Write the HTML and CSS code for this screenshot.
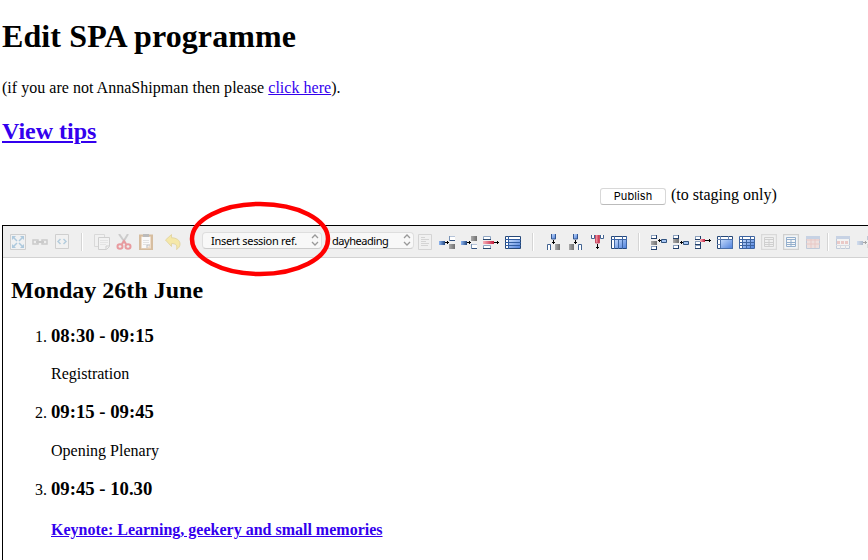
FILE: index.html
```html
<!DOCTYPE html>
<html lang="en">
<head>
<meta charset="utf-8">
<title>Edit SPA programme</title>
<link rel="stylesheet" href="styles.css">
</head>
<body>
<svg class="defs" width="0" height="0" aria-hidden="true">
  <defs>
    <linearGradient id="blue" x1="0" y1="0" x2="1" y2="1"><stop offset="0" stop-color="#c4dafb"/><stop offset="1" stop-color="#4d80dd"/></linearGradient>
    <linearGradient id="bar" x1="0" y1="0" x2="1" y2="0"><stop offset="0" stop-color="#8db6f3"/><stop offset="1" stop-color="#23477f"/></linearGradient>
    <linearGradient id="red" x1="0" y1="0" x2="1" y2="0"><stop offset="0" stop-color="#f7b3bb"/><stop offset="1" stop-color="#c51c3d"/></linearGradient>
    <linearGradient id="grey" x1="0" y1="0" x2="1" y2="0"><stop offset="0" stop-color="#aaa"/><stop offset="1" stop-color="#707070"/></linearGradient>
    <symbol id="cell" viewBox="0 0 6 5"><path fill="#fff" d="M0 0h6v5H0z"/><path fill="#b5c3d8" d="M0 0h6v1H0z"/><path fill="#34527e" d="M0 4h6v1H0z"/><path fill="#7892b5" d="M0 0h1v5H0z"/></symbol>
    <symbol id="box" viewBox="0 0 6 4"><path fill="#fff" d="M0 0h6v4H0z"/><path fill="#8ba0bd" d="M0 0h6v1H0zM0 0h1v4H0z"/><path fill="#223f6a" d="M0 3h6v1H0zM5 0h1v4H5z"/></symbol>
  </defs>
</svg>
<h1>Edit SPA programme</h1>
<p class="intro">(if you are not AnnaShipman then please <a href="#">click here</a>).</p>
<h2 class="tips"><a href="#">View tips</a></h2>
<div class="publish"><button type="button">Publish</button><span>(to staging only)</span></div>
<main class="editor">
  <div class="toolbar">
    <svg class="icon off"><path d="M.5.5h15v15H.5z" fill="#f4f8fb" stroke="#888"/><path d="M2 2h4L2 6zM14 2v4l-4-4zM2 14v-4l4 4zM14 14h-4l4-4z" fill="#1b75b5"/><path d="M3 3l4 4M13 3L9 7M3 13l4-4M13 13L9 9" stroke="#1b75b5" stroke-width="1.500"/></svg>
    <svg class="icon off"><path d="M1 6h5v4H1zM10 6h5v4h-5z" fill="#eee" stroke="#777" stroke-width="1.500"/><path d="M4 8h8" stroke="#777" stroke-width="2"/></svg>
    <svg class="icon off"><path d="M1.500.5h13v14h-13z" fill="#f8f8f8" stroke="#888"/><path d="M6.500 5L4 7.500 6.500 10M9.500 5L12 7.500 9.500 10" fill="none" stroke="#3280b5" stroke-width="1.500"/></svg>
    <i class="sep"></i>
    <svg class="icon off"><path d="M.5.500h10v12H.5z" fill="#f7f7f7" stroke="#aaa"/><path d="M4.500 3.500h11v9l-3 3h-8z" fill="#fafafa" stroke="#888"/><path d="M6 6.500h8M6 8.500h8M6 10.500h6" stroke="#ccc"/><path d="M12 15v-3h3" fill="none" stroke="#888"/></svg>
    <svg class="icon cut"><path d="M3 0l7 10M12 0L6 10" stroke="#999" stroke-width="2"/><ellipse cx="4" cy="12.500" rx="2.500" ry="2.300" fill="none" stroke="#e01c28" stroke-width="2"/><ellipse cx="12" cy="12.500" rx="2.500" ry="2.300" fill="none" stroke="#e01c28" stroke-width="2"/><path d="M6 10l2-3 2 3" fill="none" stroke="#e01c28" stroke-width="2"/></svg>
    <svg class="icon paste"><path d="M2 1.500h12v14H2z" fill="#efddca" stroke="#d6bd9f" stroke-width="2"/><path d="M4 3h8v8l-3 3H4z" fill="#fafafa"/><path d="M5 0h6v3H5z" fill="#bbb"/><path d="M5 6.500h6M5 8.500h6M5 10.500h4" stroke="#e2e2e2"/><path d="M9 14v-3h3" fill="none" stroke="#bbb"/></svg>
    <svg class="icon undo"><path d="M.5 6L6.500.5v3.300c5 0 8.500 2.500 8.500 6.200 0 2.500-1.500 4.200-3.500 5.500 1.200-4-.5-6-5-6v3z" fill="#f5e8a8" stroke="#e3d6a4"/></svg>
    <div class="select session"><span>Insert session ref.</span><svg class="chev"><path d="M1 4l3-3 3 3M1 8l3 3 3-3"/></svg></div>
    <div class="select style"><span>dayheading</span><svg class="chev"><path d="M1 4l3-3 3 3M1 8l3 3 3-3"/></svg></div>
    <svg class="icon off"><path d="M1.500.5h13v15h-13z" fill="#f5f5f5" stroke="#999"/><path d="M4 3.500h4M4 5.500h8M4 7.500h5M4 9.500h8M4 11.500h7" stroke="#999"/></svg>
    <svg class="icon"><path fill="url(#bar)" d="M0 7h6v4H0z"/><path d="M6 8.500h4M8.500 7v3" stroke="#000"/><use href="#cell" x="10" y="2" width="6" height="5"/><path fill="url(#grey)" d="M10 10h6v5h-6z"/></svg>
    <svg class="icon"><path fill="url(#bar)" d="M0 7h6v4H0z"/><path d="M6 8.500h4M8.500 7v3" stroke="#000"/><path fill="url(#grey)" d="M10 2h6v5h-6z"/><use href="#cell" x="10" y="10" width="6" height="5"/></svg>
    <svg class="icon"><path d="M.5 2.500h7v3h-7zM.5 11.500h7v3h-7z" fill="#fff" stroke="#8fa5c2"/><path d="M0 5.500h8M0 14.500h8" stroke="#29486f"/><path fill="url(#red)" d="M0 7h11v3H0z"/><path d="M11 8.500h5M14.500 7v3" stroke="#000"/></svg>
    <svg class="icon"><path d="M.5 2.500h15v12H.5z" fill="#fff" stroke="#264878"/><path fill="url(#blue)" d="M4 6h11v8H4z"/><path d="M0 5.500h16M0 8.500h16M0 11.500h16M3.500 2v13" stroke="#315da1"/></svg>
    <i class="sep"></i>
    <svg class="icon"><path fill="url(#blue)" stroke="#34568f" d="M6.500 0v5h4V0"/><path d="M8.500 6v4M7 8.500h3" stroke="#000"/><path d="M2.500 16v-5.500h3V16" fill="#fff" stroke="#426391"/><path fill="url(#grey)" d="M10 10h5v6h-5z"/></svg>
    <svg class="icon"><path fill="url(#blue)" stroke="#34568f" d="M6.500 0v5h4V0"/><path d="M8.500 6v4M7 8.500h3" stroke="#000"/><path fill="url(#grey)" d="M2 10h5v6H2z"/><path d="M11.500 16v-5.500h3V16" fill="#fff" stroke="#426391"/></svg>
    <svg class="icon"><path d="M2.500 1v3.500h3V1M11.500 1v3.500h3V1" fill="#fff" stroke="#426391"/><path fill="url(#red)" stroke="#c65066" d="M6.500 1v8h4V1"/><path d="M8.500 10v5M7 13.500h3" stroke="#000"/></svg>
    <svg class="icon"><path d="M.5 2.500h15v12H.5z" fill="#fff" stroke="#264878"/><path fill="url(#blue)" d="M4 5h12v9H4z"/><path d="M0 5.500h16M3.500 2v13M7.500 5v10M11.500 2v13M15.500 2v13" stroke="#3d65a5"/></svg>
    <i class="sep"></i>
    <svg class="icon"><use href="#box" x="0" y="1" width="6" height="4"/><path fill="url(#grey)" d="M0 7h6v4H0z"/><use href="#box" x="0" y="12" width="6" height="4"/><path d="M7 6.500h3M8.500 5v3" stroke="#000"/><path d="M10.500 5.500h5v3h-5z" fill="#a8c6f2" stroke="#31537f"/></svg>
    <svg class="icon"><use href="#box" x="0" y="1" width="6" height="4"/><path fill="url(#grey)" d="M0 5h6v4H0z"/><use href="#box" x="0" y="11" width="6" height="4"/><path d="M7 8.500h3M8.500 7v3" stroke="#000"/><path d="M10.500 7.500h5v3h-5z" fill="#a8c6f2" stroke="#31537f"/></svg>
    <svg class="icon"><use href="#box" x="0" y="2" width="6" height="4"/><use href="#box" x="0" y="7" width="6" height="4"/><use href="#box" x="0" y="11" width="6" height="4"/><path fill="url(#red)" d="M5 5h5v3H5z"/><path d="M10 6.500h6M14.500 5v3" stroke="#000"/></svg>
    <svg class="icon"><path d="M.5 2.500h15v12H.5z" fill="#fff" stroke="#264878"/><path fill="url(#blue)" stroke="#4b70aa" d="M3.500 5.500h12v9h-12z"/><path d="M3.500 2v3M0 5.500h4M0 10.500h3M11.500 2v3" stroke="#6984b1"/></svg>
    <svg class="icon"><path fill="#fff" d="M0 2h16v13H0z"/><path fill="url(#blue)" d="M4 5h11v9H4z"/><path d="M.5 2.500h15v12H.5zM0 5.500h16M0 8.500h16M0 11.500h16M3.500 2v13M7.500 5v10M11.500 2v13" fill="none" stroke="#3e64a0"/></svg>
    <svg class="icon off"><path d="M.5.5h15v15H.5z" fill="#f4f4f4" stroke="#aaa" stroke-width="1.500"/><path d="M3.500 3.500h9v9h-9zM3 5.500h10M3 8.500h10M3 10.500h10M8 6v6" fill="none" stroke="#888"/></svg>
    <svg class="icon semi"><path d="M.5.500h15v15H.5z" fill="#f4f8fb" stroke="#bbb" stroke-width="1.500"/><path d="M3.500 3.500h9v9h-9zM3 5.500h10M3 8.500h10M3 10.500h10M8 6v6" fill="#fff" stroke="#5886b7"/></svg>
    <svg class="icon off"><path d="M1.500 2.500h13v12h-13z" fill="#edc1b9" stroke="#5777aa"/><path d="M1 3.500h14" stroke="#6c91cb" stroke-width="3"/><path d="M1 6h14M1 10h14M6 5v9M10 5v9" stroke="#dc7169"/></svg>
    <i class="sep late"></i>
    <svg class="icon off"><path d="M1.500 2.500h13v12h-13z" fill="#fff" stroke="#5777aa"/><path d="M1 3.500h14" stroke="#6c91cb" stroke-width="3"/><path d="M2 8.500h12" stroke="#df756d" stroke-width="3" stroke-dasharray="3 1"/><path d="M1 11.500h14M5.500 11v4M10.500 11v4" stroke="#a3abc2"/></svg>
    <svg class="icon last off"><path fill="url(#bar)" d="M0 7h6v4H0z"/><path d="M6 8.500h4M8.500 7v3" stroke="#000"/><path d="M10 2h1v4h-1z" fill="#54739e"/><path fill="#aaa" d="M10 10h1v4h-1z"/></svg>
  </div>
  <svg class="ring" viewBox="0 0 142 78"><ellipse cx="71" cy="39" rx="68" ry="35"/></svg>
  <section class="content">
    <h2>Monday 26th June</h2>
    <ol>
      <li><h3>08:30 - 09:15</h3><p>Registration</p></li>
      <li><h3>09:15 - 09:45</h3><p>Opening Plenary</p></li>
      <li><h3>09:45 - 10.30</h3><p class="keynote"><a href="#">Keynote: Learning, geekery and small memories</a></p></li>
    </ol>
  </section>
</main>
</body>
</html>
```
FILE: styles.css
```css
* { box-sizing: border-box; }
body {
  margin: 0;
  padding: 18px 0 0 2px;
  height: 560px;
  overflow: hidden;
  background: #fff;
  color: #000;
  font: 16px/18px "Liberation Serif", serif;
}
h1, h2, h3, p, ol { margin: 0; }
a { color: #3300ee; }
.defs { position: absolute; }
h1 { font-size: 32px; line-height: 37px; letter-spacing: 0.11px; }
.intro { margin-top: 24px; letter-spacing: 0.025px; }
h2 { font-size: 24px; line-height: 28px; }
.tips { margin-top: 20px; }
.publish {
  display: flex;
  height: 20px;
  margin: 41px 0 0 598px;
  gap: 5px;
}
button {
  width: 66px;
  height: 17px;
  margin-top: 2px;
  padding: 0;
  border: 1px solid #d8d8d8;
  border-bottom-color: #bbb;
  border-radius: 3px;
  background: #fff;
  color: #000;
  font: 11px/13px Inter, sans-serif;
  letter-spacing: 0.1px;
}
.editor {
  position: relative;
  height: 335px;
  margin-top: 19px;
  border: solid #000;
  border-width: 1px 0 0 1px;
}
.toolbar {
  display: flex;
  height: 32px;
  padding: 8px 0 0 7px;
  overflow: hidden;
  border-bottom: 1px solid #d2d2d2;
  background: #efefef;
}
.icon {
  flex: none;
  width: 16px;
  height: 16px;
  margin-right: 6px;
  overflow: hidden;
}
.last { width: 11px; margin-right: 0; }
.off { opacity: 0.3; }
.semi { opacity: 0.6; }
.cut { opacity: 0.4; }
.paste { margin-right: 11px; }
.undo { margin-right: 21px; }
.sep {
  flex: none;
  width: 2px;
  height: 18px;
  margin: -1px 11px 0 5px;
  border-left: 1px solid #d5d5d5;
  background: #fff;
}
.late { margin: -1px 6px 0 0; }
.select {
  display: flex;
  flex: none;
  justify-content: space-between;
  height: 17px;
  margin-top: -2px;
  border: 1px solid #dedede;
  border-bottom-color: #ccc;
  border-radius: 4px;
  background: #f8f8f8;
  font: 11px/16px "Noto Sans", sans-serif;
  letter-spacing: -0.3px;
  white-space: nowrap;
}
.session { width: 120px; padding: 0 2px 0 8px; }
.style {
  width: 88px;
  margin-right: 3px;
  margin-left: 4px;
  padding: 0 2px 0 5px;
  letter-spacing: -0.45px;
}
.chev {
  width: 8px;
  height: 12px;
  margin-top: 1px;
  fill: none;
  stroke: #999;
  stroke-width: 1.3;
}
.ring {
  position: absolute;
  left: 186px;
  top: -26px;
  width: 142px;
  height: 78px;
  fill: none;
  stroke: #f00;
  stroke-width: 4.5;
}
.content { padding: 18px 0 0 8px; }
ol { margin-top: 20px; padding-left: 40px; }
li { height: 77px; }
h3 { font-size: 18.72px; line-height: 22px; }
li:first-child h3 { padding-top: 1px; }
li p { margin-top: 19px; }
li:first-child p { margin-top: 18px; }
.keynote { margin-top: 21px; font-weight: bold; }
```
